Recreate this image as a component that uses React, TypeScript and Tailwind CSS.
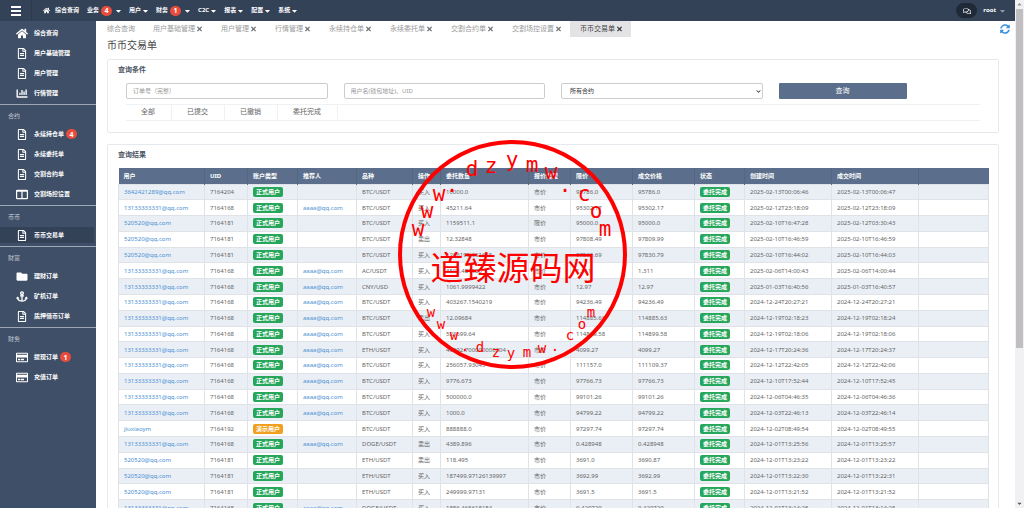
import React from 'react';
import {
  FaAnchor, FaCaretDown, FaChartBar, FaChevronDown, FaFolder, FaHome,
  FaRegComments, FaRegCreditCard, FaRegFileAlt, FaSyncAlt, FaTimes
} from 'react-icons/fa';

const ColumnsIcon: React.FC<{ className?: string }> = ({ className }) => (
  <svg viewBox="0 0 20 16" fill="none" stroke="currentColor" strokeWidth="2" className={className}>
    <rect x="1" y="1" width="18" height="14" rx="1" />
    <path d="M1 2.5h18M10 2v13" />
  </svg>
);

const navItems = [
  { label: '业务', badge: 4 },
  { label: '用户' },
  { label: '财务', badge: 1 },
  { label: 'C2C' },
  { label: '报表' },
  { label: '配置' },
  { label: '系统' }
];

const sections = [
  {
    items: [
      { label: '综合查询', icon: FaHome },
      { label: '用户基础管理', icon: FaRegFileAlt },
      { label: '用户管理', icon: FaRegFileAlt },
      { label: '行情管理', icon: FaChartBar }
    ]
  },
  {
    title: '合约',
    items: [
      { label: '永续持仓单', icon: FaRegFileAlt, badge: 4 },
      { label: '永续委托单', icon: FaRegFileAlt },
      { label: '交割合约单', icon: FaRegFileAlt },
      { label: '交割场控设置', icon: ColumnsIcon }
    ]
  },
  { title: '币币', items: [{ label: '币币交易单', icon: FaRegFileAlt, active: true }] },
  {
    title: '财富',
    items: [
      { label: '理财订单', icon: FaFolder },
      { label: '矿机订单', icon: FaAnchor },
      { label: '质押借币订单', icon: FaRegFileAlt }
    ]
  },
  {
    title: '财务',
    items: [
      { label: '提现订单', icon: FaRegCreditCard, badge: 1 },
      { label: '充值订单', icon: FaRegCreditCard }
    ]
  }
] as {
  title?: string;
  items: { label: string; icon: React.ComponentType<{ className?: string }>; badge?: number; active?: boolean }[];
}[];

const tabs = ['用户基础管理', '用户管理', '行情管理', '永续持仓单', '永续委托单', '交割合约单', '交割场控设置', '币币交易单'];

const filters = ['全部', '已提交', '已撤销', '委托完成'];

const columns = [
  { label: '用户', width: 'w-[86px]' },
  { label: 'UID', width: 'w-[43px]' },
  { label: '账户类型', width: 'w-[50px]' },
  { label: '推荐人', width: 'w-[59px]' },
  { label: '品种', width: 'w-[56px]' },
  { label: '操作', width: 'w-[28px]' },
  { label: '委托数量', width: 'w-[88px]' },
  { label: '报价类型', width: 'w-[42px]' },
  { label: '限价', width: 'w-[62px]' },
  { label: '成交价格', width: 'w-[62px]' },
  { label: '状态', width: 'w-[50px]' },
  { label: '创建时间', width: 'w-[87px]' },
  { label: '成交时间', width: 'w-[87px]' },
  { label: '', width: 'w-[70px]' }
];

const Q1 = '13133333331@qq.com';
const Q2 = '520520@qq.com';
const REF = 'aaaa@qq.com';

// user, uid, referrer, symbol, side, amount, price type, limit, deal price, created, closed
const rows = [
  ['3642421289@qq.com', '7164204', '', 'BTC/USDT', '买入', '10000.0', '市价', '95786.0', '95786.0', '2025-02-13T00:06:46', '2025-02-13T00:06:47'],
  [Q1, '7164168', REF, 'BTC/USDT', '买入', '45211.64', '市价', '95302.17', '95302.17', '2025-02-12T23:18:09', '2025-02-12T23:18:09'],
  [Q2, '7164181', '', 'BTC/USDT', '买入', '1159511.1', '限价', '95000.0', '95000.0', '2025-02-10T16:47:28', '2025-02-12T03:30:43'],
  [Q2, '7164181', '', 'BTC/USDT', '卖出', '12.32848', '市价', '97808.49', '97809.99', '2025-02-10T16:46:59', '2025-02-10T16:46:59'],
  [Q2, '7164181', '', 'BTC/USDT', '买入', '1236195.661665', '市价', '97830.69', '97830.79', '2025-02-10T16:44:02', '2025-02-10T16:44:03'],
  [Q1, '7164168', REF, 'AC/USDT', '买入', '3508.481585', '市价', '1.311', '1.311', '2025-02-06T14:00:43', '2025-02-06T14:00:44'],
  [Q1, '7164168', REF, 'CNY/USD', '买入', '1061.9999422', '市价', '12.97', '12.97', '2025-01-03T16:40:56', '2025-01-03T16:40:57'],
  [Q1, '7164168', REF, 'BTC/USDT', '买入', '403267.1540219', '市价', '94236.49', '94236.49', '2024-12-24T20:27:21', '2024-12-24T20:27:21'],
  [Q1, '7164168', REF, 'BTC/USDT', '卖出', '12.09684', '市价', '114885.63', '114885.63', '2024-12-19T02:18:23', '2024-12-19T02:18:24'],
  [Q1, '7164168', REF, 'BTC/USDT', '买入', '523699.64', '市价', '114899.58', '114899.58', '2024-12-19T02:18:06', '2024-12-19T02:18:06'],
  [Q1, '7164168', REF, 'ETH/USDT', '买入', '49992.700000000004', '市价', '4099.27', '4099.27', '2024-12-17T20:24:36', '2024-12-17T20:24:37'],
  [Q1, '7164168', REF, 'BTC/USDT', '买入', '256057.93045', '市价', '111157.0', '111109.37', '2024-12-12T22:42:05', '2024-12-12T22:42:06'],
  [Q1, '7164168', REF, 'BTC/USDT', '买入', '9776.673', '市价', '97766.73', '97766.73', '2024-12-10T17:52:44', '2024-12-10T17:52:45'],
  [Q1, '7164168', REF, 'BTC/USDT', '买入', '500000.0', '市价', '99101.26', '99101.26', '2024-12-06T04:46:35', '2024-12-06T04:46:36'],
  [Q1, '7164168', REF, 'BTC/USDT', '买入', '1000.0', '市价', '94799.22', '94799.22', '2024-12-03T22:46:13', '2024-12-03T22:46:14'],
  ['jiuxiaoym', '7164192', '', 'BTC/USDT', '买入', '888888.0', '市价', '97297.74', '97297.74', '2024-12-02T08:49:54', '2024-12-02T08:49:55'],
  [Q1, '7164168', REF, 'DOGE/USDT', '卖出', '4389.896', '市价', '0.428948', '0.428948', '2024-12-01T13:25:56', '2024-12-01T13:25:57'],
  [Q2, '7164181', '', 'ETH/USDT', '卖出', '118.495', '市价', '3691.0', '3690.87', '2024-12-01T13:23:22', '2024-12-01T13:23:22'],
  [Q2, '7164181', '', 'ETH/USDT', '买入', '187499.97126139997', '市价', '3692.99', '3692.99', '2024-12-01T13:22:30', '2024-12-01T13:22:31'],
  [Q2, '7164181', '', 'ETH/USDT', '买入', '249999.97131', '市价', '3691.5', '3691.5', '2024-12-01T13:21:52', '2024-12-01T13:21:52'],
  [Q1, '7164168', REF, 'DOGE/USDT', '买入', '1886.465618184', '市价', '0.429729', '0.429729', '2024-12-01T13:14:25', '2024-12-01T13:14:25']
];

const Badge: React.FC<{ count: number }> = ({ count }) => (
  <span className="flex h-[10px] w-[11px] shrink-0 items-center justify-center rounded-full bg-[#e74c3c] text-[7px] leading-none font-bold text-white">{count}</span>
);

const Tag: React.FC<{ tone?: 'green' | 'orange'; children: React.ReactNode }> = ({ tone = 'green', children }) => (
  <span className={`flex h-[10px] w-[30px] items-center justify-center rounded-[2px] font-bold leading-none text-white ${tone === 'green' ? 'bg-[#26a65b]' : 'bg-[#f0a01e]'}`}>
    {children}
  </span>
);

const TopBar: React.FC = () => (
  <header className="flex h-[21px] shrink-0 items-center bg-[#344258] text-[6px] font-bold text-white">
    <button aria-label="菜单" className="flex h-full w-8 shrink-0 flex-col items-center justify-center gap-[2px] border-r border-[#2d3a4e]">
      <span className="h-[2px] w-[10px] bg-white" />
      <span className="h-[2px] w-[10px] bg-white" />
      <span className="h-[2px] w-[10px] bg-white" />
    </button>
    <nav className="flex items-center gap-2 pl-[11px]">
      <a href="#" className="flex items-center gap-[5px]"><FaHome className="size-[7px]" />综合查询</a>
      {navItems.map(item => (
        <a key={item.label} href="#" className="flex items-center gap-[2px]">
          {item.label}
          {item.badge && <Badge count={item.badge} />}
          <FaCaretDown className={item.badge ? 'ml-[2px] h-2 w-[5px]' : 'h-2 w-[5px]'} />
        </a>
      ))}
    </nav>
    <div className="ml-auto flex items-center gap-[6px] pr-[10px]">
      <button aria-label="消息" className="flex h-[15px] w-[21px] items-center justify-center rounded-full bg-[#1f2937]">
        <FaRegComments className="size-2" />
      </button>
      <button className="flex items-center gap-1">root<FaCaretDown className="h-2 w-[5px] text-[#8e98a8]" /></button>
    </div>
  </header>
);

const Sidebar: React.FC = () => (
  <aside className="w-24 shrink-0 bg-[#3f4f67] pt-[2px] text-[6px] text-white">
    {sections.map((section, i) => (
      <div key={i} className={i === 0 ? 'pb-px' : 'border-t border-[#9ea7b5] pb-px'}>
        {section.title && <h3 className="flex h-[19px] items-center pt-[3px] pl-2 text-[#c3cad4]">{section.title}</h3>}
        <ul>
          {section.items.map(item => {
            const Icon = item.icon;
            return (
              <li key={item.label} className="flex h-5 items-center pr-[2px]">
                <a href="#" className={`flex h-4 w-full items-center pl-4 ${item.active ? 'bg-[#344258]' : ''}`}>
                  <span className="flex w-3 justify-center"><Icon className="h-[11px] w-3" /></span>
                  <span className="pr-[2px] pl-[6px] font-bold">{item.label}</span>
                  {item.badge && <Badge count={item.badge} />}
                </a>
              </li>
            );
          })}
        </ul>
      </div>
    ))}
  </aside>
);

const TabBar: React.FC = () => (
  <div className="flex h-4 items-center text-[7px] text-[#9a9a9a]">
    <button className="mr-2 shrink-0">综合查询</button>
    {tabs.map(tab => (
      <button
        key={tab}
        className={`flex h-full shrink-0 items-center gap-[2px] pr-[9px] pl-[10px] ${tab === '币币交易单' ? 'bg-[#e3e3e6] text-[#444]' : ''}`}
      >
        {tab}<FaTimes className={`h-2 w-[5px] ${tab === '币币交易单' ? '' : 'text-[#777]'}`} />
      </button>
    ))}
    <button aria-label="刷新" className="ml-auto pr-[5px] text-[#3b8fe0]"><FaSyncAlt className="size-[10px]" /></button>
  </div>
);

const SearchPanel: React.FC = () => (
  <section className="mt-[6px] mr-4 rounded-[2px] border border-[#e6e9ed] px-[10px] pt-[2px] pb-[11px]">
    <h2 className="text-[7px] leading-4 font-bold text-[#4b5563]">查询条件</h2>
    <form className="mt-[5px] grid grid-cols-4 text-[6px] text-[#555]" onSubmit={e => e.preventDefault()}>
      <div className="px-2">
        <input aria-label="订单号" placeholder="订单号（完整）" className="block h-4 w-full rounded-[2px] border border-[#ccc] px-[6px] placeholder:text-[#999]" />
      </div>
      <div className="px-2">
        <input aria-label="用户名" placeholder="用户名(钱包地址)、UID" className="block h-4 w-full rounded-[2px] border border-[#ccc] px-[6px] placeholder:text-[#999]" />
      </div>
      <div className="relative px-2">
        <select aria-label="合约" className="block h-4 w-full appearance-none rounded-[2px] border border-[#ccc] bg-white px-2 text-[#333]">
          <option>所有合约</option>
        </select>
        <FaChevronDown className="pointer-events-none absolute top-[6px] right-[10px] size-[5px] text-[#333]" />
      </div>
      <div className="px-2">
        <button className="block h-4 w-32 rounded-[1px] bg-[#5b6f8c] text-[7px] text-white">查询</button>
      </div>
    </form>
    <div className="mx-2 mt-[5px] flex h-[17px] border-y border-[#eff1f3] text-[7px] text-[#666]">
      {filters.map(f => (
        <button key={f} className="border-r border-[#eff1f3] pr-4 pl-[15px]">{f}</button>
      ))}
    </div>
  </section>
);

const ResultTable: React.FC = () => (
  <table className="mt-[5px] h-[348px] w-full table-fixed border-collapse text-left text-[6px] leading-[8px] text-[#666]">
    <colgroup>
      {columns.map((c, i) => <col key={i} className={c.width} />)}
    </colgroup>
    <thead>
      <tr className="h-4 bg-[#5b6f8c] text-white">
        {columns.map((c, i) => <th key={i} className="border-r border-[#54677f] px-[5px] py-0 font-bold last:border-r-0">{c.label}</th>)}
      </tr>
    </thead>
    <tbody>
      {rows.map(([user, uid, referrer, symbol, side, amount, priceType, limit, deal, created, closed], i) => (
        <tr key={i} className="odd:bg-[#eaeff6] [&>td]:border [&>td]:border-[#dfe2e6] [&>td]:px-[5px] [&>td]:py-0 [&>td]:whitespace-nowrap">
          <td><a href="#" className="text-[#4a8fd3]">{user}</a></td>
          <td>{uid}</td>
          <td><Tag tone={user === 'jiuxiaoym' ? 'orange' : 'green'}>{user === 'jiuxiaoym' ? '演示用户' : '正式用户'}</Tag></td>
          <td><a href="#" className="text-[#4a8fd3]">{referrer}</a></td>
          <td>{symbol}</td>
          <td>{side}</td>
          <td>{amount}</td>
          <td>{priceType}</td>
          <td>{limit}</td>
          <td>{deal}</td>
          <td><Tag>委托完成</Tag></td>
          <td>{created}</td>
          <td>{closed}</td>
          <td />
        </tr>
      ))}
    </tbody>
  </table>
);

// [char, x, baseline]
const upperArc: [string, number, number][] = [
  ['w', 20, 96], ['w', 29, 78], ['w', 41, 61], ['.', 54, 52], ['d', 74, 36], ['z', 93, 33], ['y', 114, 27],
  ['m', 134, 32], ['w', 153, 39], ['.', 167, 52], ['c', 186, 61], ['o', 198, 78], ['m', 207, 96]
];
const lowerArc: [string, number, number][] = [
  ['w', 33, 177], ['w', 43, 189], ['w', 56, 200], ['.', 67, 211], ['d', 82, 212], ['z', 98, 217], ['y', 113, 218],
  ['m', 129, 217], ['w', 144, 213], ['.', 157, 211], ['c', 172, 200], ['o', 184, 189], ['m', 193, 177]
];

const Stamp: React.FC = () => (
  <svg viewBox="0 0 230 230" className="pointer-events-none absolute top-[140px] left-[398px] size-[230px] fill-[#f00]">
    <circle cx="114.5" cy="114.5" r="112.5" fill="none" stroke="#f00" strokeWidth="4" />
    <g fontSize="21" textAnchor="middle" className="font-['DejaVu_Sans_Mono',monospace]">
      {upperArc.map(([ch, x, y], i) => <text key={i} x={x} y={y}>{ch}</text>)}
    </g>
    <text x="115" y="140" fontSize="33" textAnchor="middle">道臻源码网</text>
    <g fontSize="14" textAnchor="middle" className="font-['DejaVu_Sans_Mono',monospace]">
      {lowerArc.map(([ch, x, y], i) => <text key={i} x={x} y={y}>{ch}</text>)}
    </g>
  </svg>
);

const ScrollBar: React.FC = () => (
  <div className="flex w-[9px] shrink-0 flex-col items-center bg-[#f1f0f2]" aria-hidden="true">
    <FaCaretDown className="size-[9px] shrink-0 rotate-180 p-px text-[#999]" />
    <div className="h-2/3 w-[7px] bg-[#c1bec1]" />
    <FaCaretDown className="mt-auto size-[9px] shrink-0 p-px text-[#555]" />
  </div>
);

export default function App() {
  return (
    <div className="relative flex h-screen overflow-hidden bg-white font-['Noto_Sans','Noto_Sans_CJK_SC',sans-serif]">
      <div className="flex min-w-0 flex-1 flex-col">
        <TopBar />
        <div className="flex min-h-0 flex-1">
          <Sidebar />
          <main className="min-w-0 flex-1 overflow-hidden pl-[11px]">
            <TabBar />
            <h1 className="text-[10px] leading-4 text-[#444]">币币交易单</h1>
            <SearchPanel />
            <section className="mt-[11px] mr-4 rounded-[2px] border border-[#e6e9ed] px-[10px] pt-[2px] pb-4">
              <h2 className="text-[7px] leading-4 font-bold text-[#4b5563]">查询结果</h2>
              <ResultTable />
            </section>
          </main>
        </div>
      </div>
      <ScrollBar />
      <Stamp />
    </div>
  );
}
